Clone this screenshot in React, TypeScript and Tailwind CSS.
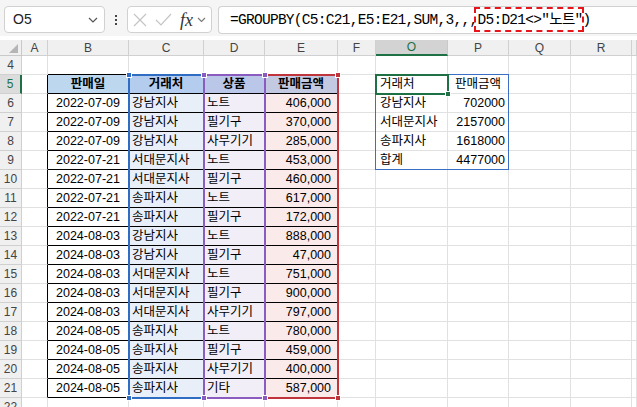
import React from "react"

const sans = "font-['Liberation_Sans','Noto_Sans_CJK_KR',sans-serif]"

const cols = ["", "A", "B", "C", "D", "E", "F", "O", "P", "Q", "R", ""]

const sales = [
  ["2022-07-09", "강남지사", "노트", "406,000"],
  ["2022-07-09", "강남지사", "필기구", "370,000"],
  ["2022-07-09", "강남지사", "사무기기", "285,000"],
  ["2022-07-21", "서대문지사", "노트", "453,000"],
  ["2022-07-21", "서대문지사", "필기구", "460,000"],
  ["2022-07-21", "송파지사", "노트", "617,000"],
  ["2022-07-21", "송파지사", "필기구", "172,000"],
  ["2024-08-03", "강남지사", "노트", "888,000"],
  ["2024-08-03", "강남지사", "필기구", "47,000"],
  ["2024-08-03", "서대문지사", "노트", "751,000"],
  ["2024-08-03", "서대문지사", "필기구", "900,000"],
  ["2024-08-03", "서대문지사", "사무기기", "797,000"],
  ["2024-08-05", "송파지사", "노트", "780,000"],
  ["2024-08-05", "송파지사", "필기구", "459,000"],
  ["2024-08-05", "송파지사", "사무기기", "400,000"],
  ["2024-08-05", "송파지사", "기타", "587,000"],
]

const spill = [
  ["거래처", "판매금액"],
  ["강남지사", "702000"],
  ["서대문지사", "2157000"],
  ["송파지사", "1618000"],
  ["합계", "4477000"],
]

const headerBg = ["bg-[#bdd7ee]", "bg-[#b4cced]", "bg-[#bac7e9]", "bg-[#c3c9e1]"]
const bodyBg = ["bg-white", "bg-[#e9eff9]", "bg-[#f1eef8]", "bg-[#faeaea]"]
const bodyAlign = ["justify-center", "pl-[3px]", "pl-[3px]", "justify-end pr-[6px]"]

function Toolbar() {
  return (
    <div className="h-[40px] bg-white">
      <div className="flex h-[36px] items-start bg-[#f5f5f5] pt-[6px]">
        <div className="ml-[4px] flex h-[27px] w-[101px] items-center justify-between rounded-[4px] border border-[#d1d1d1] bg-white pl-[8px] pr-[6px]">
          <span className={`${sans} text-[14px] text-[#222]`}>O5</span>
          <svg width="10" height="6" viewBox="0 0 10 6" fill="none" stroke="#555" strokeWidth="1.2">
            <path d="M1 1l4 4 4-4" />
          </svg>
        </div>
        <div className="flex h-[27px] w-[22px] flex-col items-center justify-center gap-[2px]">
          <span className="h-[2px] w-[2px] bg-[#444]" />
          <span className="h-[2px] w-[2px] bg-[#444]" />
          <span className="h-[2px] w-[2px] bg-[#444]" />
        </div>
        <div className="flex h-[27px] w-[85px] items-center rounded-[4px] border border-[#d1d1d1] bg-white pl-[4px]">
          <svg width="14" height="14" viewBox="0 0 14 14" fill="none" stroke="#c4c4c4" strokeWidth="1.2" className="ml-[1px]">
            <path d="M1 1l12 12M13 1L1 13" />
          </svg>
          <svg width="17" height="13" viewBox="0 0 17 13" fill="none" stroke="#c4c4c4" strokeWidth="1.2" className="ml-[8px]">
            <path d="M1 7l5 5L16 1" />
          </svg>
          <span className="ml-[8px] font-['Liberation_Serif',serif] text-[18px] italic leading-none text-[#333]">fx</span>
          <svg width="9" height="6" viewBox="0 0 9 6" fill="none" stroke="#777" strokeWidth="1.1" className="ml-[4px]">
            <path d="M1 1l3.5 3.5L8 1" />
          </svg>
        </div>
        <div className="ml-[6px] flex h-[28px] flex-1 items-center rounded-l-[4px] border border-r-0 border-[#d1d1d1] bg-white pl-[11px]">
          <span className="whitespace-nowrap font-['Liberation_Mono','Noto_Sans_CJK_KR',monospace] text-[14.5px] leading-[18px] tracking-[-0.72px] text-black">
            =GROUPBY(C5:C21,E5:E21,SUM,3,,,
            <span className="relative inline-block">
              D5:D21&lt;&gt;"노트"
              <span className="absolute -bottom-[3px] -left-[3px] -right-[1px] -top-[4px] border-2 border-dashed border-[#e8141b]" />
            </span>
            )
          </span>
        </div>
      </div>
    </div>
  )
}

function HeaderRow() {
  return (
    <>
      {cols.map((c, i) => {
        if (i === 0)
          return (
            <div key={i} className="relative border-b border-r border-[#c9c9c9] bg-[#f0f0f0]">
              <svg width="9" height="9" viewBox="0 0 9 9" className="absolute bottom-[2px] right-[3px]">
                <path d="M9 0V9H0Z" fill="#b5b5b5" />
              </svg>
            </div>
          )
        if (c === "O")
          return (
            <div key={i} className={`${sans} flex items-center justify-center border-b-2 border-r border-b-[#1e7145] border-r-[#c9c9c9] bg-[#d3d3d3] text-[12px] text-[#1e7145]`}>
              {c}
            </div>
          )
        return (
          <div key={i} className={`${sans} flex items-center justify-center border-b border-r border-[#d0d0d0] bg-[#f0f0f0] text-[12px] text-[#444]`}>
            {c}
          </div>
        )
      })}
    </>
  )
}

function Cell({ r, ci }: { r: number; ci: number }) {
  const base = `${sans} flex items-center overflow-hidden whitespace-nowrap text-[12.5px] text-black`
  if (ci === 0) {
    if (r === 5)
      return <div className={`${sans} flex items-center justify-center border-b border-r-2 border-b-[#d0d0d0] border-r-[#1e7145] bg-[#dcdcdc] text-[12px] text-[#1e7145]`}>{r}</div>
    return <div className={`${sans} flex items-center justify-center border-b border-r border-[#d0d0d0] bg-[#f0f0f0] text-[12px] text-[#444]`}>{r}</div>
  }
  // data table B5:E21
  if (r >= 5 && r <= 21 && ci >= 2 && ci <= 5) {
    const k = ci - 2
    if (r === 5)
      return (
        <div className={`${base} ${headerBg[k]} justify-center border-b border-r border-black font-semibold`}>
          {["판매일", "거래처", "상품", "판매금액"][k]}
        </div>
      )
    return <div className={`${base} ${bodyBg[k]} ${bodyAlign[k]} border-b border-r border-black`}>{sales[r - 6][k]}</div>
  }
  if (ci === 1 && r >= 5 && r <= 21) return <div className="border-b border-r border-b-[#e1e1e1] border-r-black bg-white" />
  if (r === 4 && ci >= 2 && ci <= 5) return <div className="border-b border-r border-b-black border-r-[#e1e1e1] bg-white" />
  // GROUPBY spill O5:P9
  if (r >= 5 && r <= 9 && (ci === 7 || ci === 8)) {
    const v = spill[r - 5][ci - 7]
    if (ci === 7) return <div className={`${base} border-b border-r border-[#e1e1e1] pl-[4px]`}>{v}</div>
    if (r === 5) return <div className={`${base} justify-center border-b border-r border-[#e1e1e1]`}>{v}</div>
    return <div className={`${base} justify-end border-b border-r border-[#e1e1e1] pr-[3px]`}>{v}</div>
  }
  return <div className="border-b border-r border-[#e1e1e1] bg-white" />
}

function Handle({ className }: { className: string }) {
  return <div className={`absolute h-[6px] w-[6px] border border-white ${className}`} />
}

export default function App() {
  const rows = Array.from({ length: 19 }, (_, i) => i + 4)
  return (
    <div className="h-[407px] w-[637px] overflow-hidden bg-white">
      <Toolbar />
      <div className="relative">
        <div className="grid grid-cols-[22px_26px_81px_75px_61px_73px_38px_72px_61px_62px_61px_1fr] grid-rows-[16px] auto-rows-[19px]">
          <HeaderRow />
          {rows.map((r) => cols.map((_, ci) => <Cell key={`${r}-${ci}`} r={r} ci={ci} />))}
        </div>

        {/* formula reference highlights */}
        <div className="absolute left-[128px] top-[34px] h-[325px] w-[77px] border-2 border-[#2f6cc4]" />
        <div className="absolute left-[264px] top-[34px] h-[325px] w-[75px] border-2 border-[#c0343c]" />
        <div className="absolute left-[203px] top-[34px] h-[325px] w-[63px] border-2 border-[#8a5cc0]" />
        <Handle className="left-[126px] top-[32px] bg-[#2f6cc4]" />
        <Handle className="left-[126px] top-[355px] bg-[#2f6cc4]" />
        <Handle className="left-[335px] top-[32px] bg-[#c0343c]" />
        <Handle className="left-[335px] top-[355px] bg-[#c0343c]" />
        <Handle className="left-[201px] top-[32px] bg-[#8a5cc0]" />
        <Handle className="left-[262px] top-[32px] bg-[#8a5cc0]" />
        <Handle className="left-[201px] top-[355px] bg-[#8a5cc0]" />
        <Handle className="left-[262px] top-[355px] bg-[#8a5cc0]" />

        {/* spill range + active cell */}
        <div className="absolute left-[375px] top-[34px] h-[96px] w-[134px] border border-[#3b6fc6]" />
        <div className="absolute left-[375px] top-[34px] h-[21px] w-[74px] border-2 border-[#1e7145]" />
        <Handle className="left-[445px] top-[51px] bg-[#1e7145]" />
      </div>
    </div>
  )
}
